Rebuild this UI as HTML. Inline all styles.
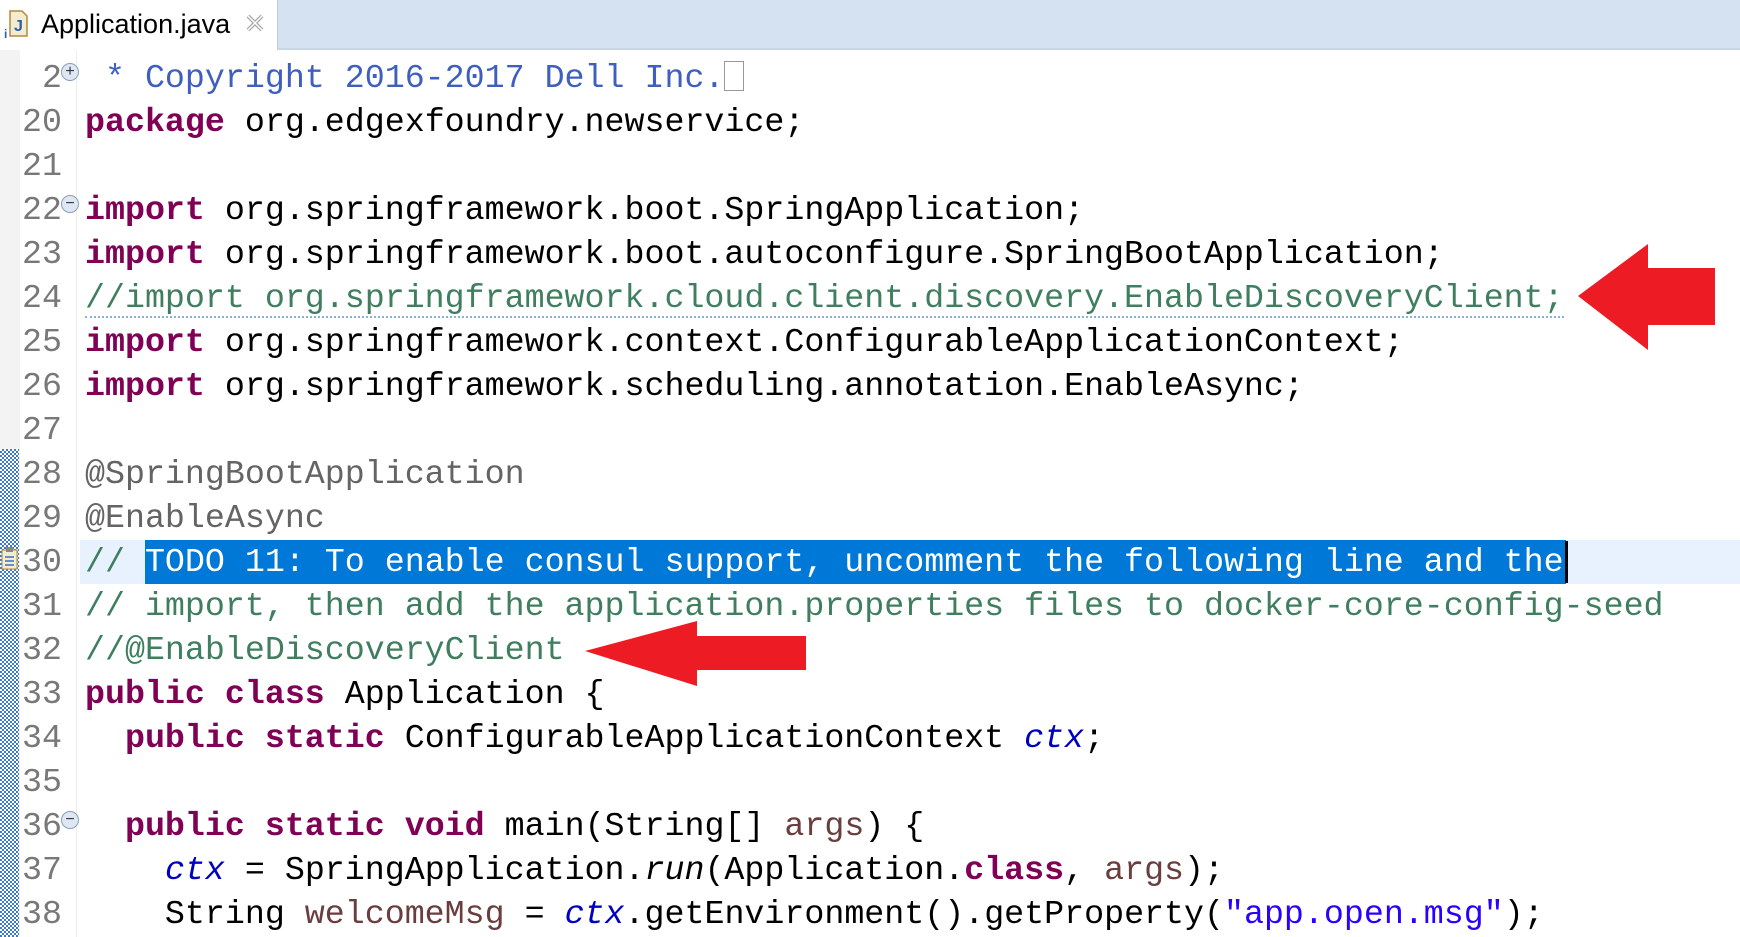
<!DOCTYPE html>
<html><head><meta charset="utf-8"><style>
html,body{margin:0;padding:0;width:1740px;height:937px;overflow:hidden;background:#fff;}
.tabbar{position:absolute;left:0;top:0;width:1740px;height:48px;background:#d5e2f1;border-bottom:2px solid #c9d6e6;}
.tab{position:absolute;left:0;top:0;width:277px;height:50px;background:#fff;border-right:1px solid #c0cbd8;font-family:"Liberation Sans",sans-serif;font-size:27px;}
.tab .t{position:absolute;left:41px;top:9px;color:#000;}
.strip{position:absolute;left:0;top:50px;width:20px;height:887px;background:#f3f3f3;}
.checks{position:absolute;left:0;top:449px;width:19px;height:488px;background:repeating-conic-gradient(#3c7ac9 0 25%,#fff 0 50%) 0 0/4px 4px;}
.gsep{position:absolute;left:76px;top:50px;width:1px;height:887px;background:#eee;}
.cur{position:absolute;left:80px;top:540px;width:1660px;height:44px;background:#e8f2fe;}
.sel{position:absolute;left:145px;top:540px;width:1421px;height:44px;background:#0078d7;}
.caret{position:absolute;left:1565px;top:541px;width:3px;height:42px;background:#000;}
.ln{position:absolute;left:0;width:62px;text-align:right;color:#787878;}
.code{position:absolute;left:85px;white-space:pre;}
.ln,.code{font-family:"Liberation Mono",monospace;font-size:33.3px;line-height:44px;height:44px;}
.k{color:#7f0055;font-weight:bold}
.c{color:#3f7f5f}
.j{color:#3f5fbf}
.a{color:#646464}
.f{color:#0000c0;font-style:italic}
.s{color:#2a00ff}
.v{color:#6a3e3e}
.w{color:#fff}
.fold{position:absolute;left:61px;width:16px;height:16px;border-radius:50%;border:1px solid #8aa0b8;background:#dfe8f2;font-family:"Liberation Sans",sans-serif;font-size:16px;line-height:15px;text-align:center;color:#334;}
</style></head><body>
<div class="tabbar"></div>
<div class="tab"><svg style="position:absolute;left:4px;top:9px" width="26" height="30" viewBox="0 0 26 30"><path d="M6 2h12l5 5v20H6z" fill="#f4ecd0" stroke="#b08a3a" stroke-width="1.5"/><text x="10" y="22" font-family="Liberation Sans" font-weight="bold" font-size="16" fill="#2a5ea8">J</text><text x="0" y="29" font-family="Liberation Sans" font-weight="bold" font-size="12" fill="#2a5ea8">i</text></svg><span class="t">Application.java</span><svg style="position:absolute;left:245px;top:13px" width="20" height="20"><path d="M3 3L17 17M17 3L3 17" stroke="#aaa" stroke-width="4"/><path d="M3 3L17 17M17 3L3 17" stroke="#fff" stroke-width="1.5"/></svg></div>
<div class="strip"></div>
<div class="checks"></div>
<div class="gsep"></div>
<div class="cur"></div>
<div class="sel"></div>
<div class="caret"></div>
<svg style="position:absolute;left:0;top:546px" width="20" height="26"><rect x="2" y="4" width="15" height="19" fill="#f4ecd0" stroke="#b08a3a"/><rect x="6" y="1" width="7" height="5" fill="#888"/><path d="M5 11h9M5 15h9M5 19h9" stroke="#3c6fc0" stroke-width="1.5"/></svg>
<div class="fold" style="top:63px">+</div>
<div class="fold" style="top:195px">−</div>
<div class="fold" style="top:811px">−</div>

<div class="ln" style="top:56px">2</div><div class="code j" style="top:56px"> * Copyright 2016-2017 Dell Inc.<span style="display:inline-block;width:18px;height:28px;border:1px solid #999;vertical-align:-4px"></span></div>
<div class="ln" style="top:100px">20</div><div class="code" style="top:100px"><span class="k">package</span> org.edgexfoundry.newservice;</div>
<div class="ln" style="top:144px">21</div>
<div class="ln" style="top:188px">22</div><div class="code" style="top:188px"><span class="k">import</span> org.springframework.boot.SpringApplication;</div>
<div class="ln" style="top:232px">23</div><div class="code" style="top:232px"><span class="k">import</span> org.springframework.boot.autoconfigure.SpringBootApplication;</div>
<div class="ln" style="top:276px">24</div><div class="code c" style="top:276px;border-bottom:2px dotted #8ab0e0;height:40px">//import org.springframework.cloud.client.discovery.EnableDiscoveryClient;</div>
<div class="ln" style="top:320px">25</div><div class="code" style="top:320px"><span class="k">import</span> org.springframework.context.ConfigurableApplicationContext;</div>
<div class="ln" style="top:364px">26</div><div class="code" style="top:364px"><span class="k">import</span> org.springframework.scheduling.annotation.EnableAsync;</div>
<div class="ln" style="top:408px">27</div>
<div class="ln" style="top:452px">28</div><div class="code a" style="top:452px">@SpringBootApplication</div>
<div class="ln" style="top:496px">29</div><div class="code a" style="top:496px">@EnableAsync</div>
<div class="ln" style="top:540px">30</div><div class="code c" style="top:540px">// <span class="w">TODO 11: To enable consul support, uncomment the following line and the</span></div>
<div class="ln" style="top:584px">31</div><div class="code c" style="top:584px">// import, then add the application.properties files to docker-core-config-seed</div>
<div class="ln" style="top:628px">32</div><div class="code c" style="top:628px">//@EnableDiscoveryClient</div>
<div class="ln" style="top:672px">33</div><div class="code" style="top:672px"><span class="k">public</span> <span class="k">class</span> Application {</div>
<div class="ln" style="top:716px">34</div><div class="code" style="top:716px">  <span class="k">public</span> <span class="k">static</span> ConfigurableApplicationContext <span class="f">ctx</span>;</div>
<div class="ln" style="top:760px">35</div>
<div class="ln" style="top:804px">36</div><div class="code" style="top:804px">  <span class="k">public</span> <span class="k">static</span> <span class="k">void</span> main(String[] <span class="v">args</span>) {</div>
<div class="ln" style="top:848px">37</div><div class="code" style="top:848px">    <span class="f">ctx</span> = SpringApplication.<i>run</i>(Application.<span class="k">class</span>, <span class="v">args</span>);</div>
<div class="ln" style="top:892px">38</div><div class="code" style="top:892px">    String <span class="v">welcomeMsg</span> = <span class="f">ctx</span>.getEnvironment().getProperty(<span class="s">"app.open.msg"</span>);</div>

<svg style="position:absolute;left:0;top:0" width="1740" height="937">
<polygon points="1578,296 1648,244 1648,268 1715,268 1715,325 1648,325 1648,350" fill="#ed1c24"/>
<polygon points="585,651 697,621 697,636 806,636 806,670 697,670 697,686" fill="#ed1c24"/>
</svg>
</body></html>
